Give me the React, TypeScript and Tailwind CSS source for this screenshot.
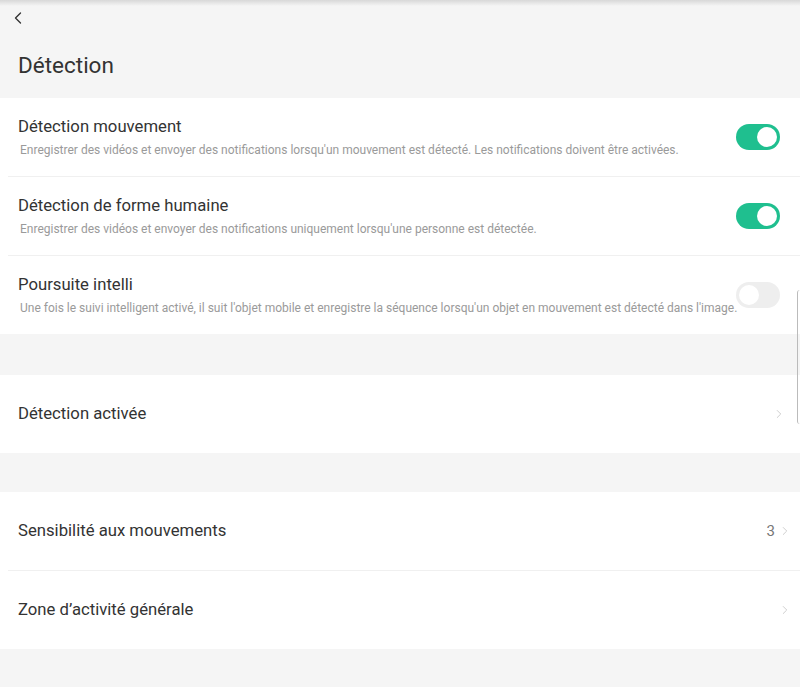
import { ChevronLeft, ChevronRight } from "lucide-react";

const toggles = [
  {
    title: "Détection mouvement",
    desc: "Enregistrer des vidéos et envoyer des notifications lorsqu'un mouvement est détecté. Les notifications doivent être activées.",
    on: true,
  },
  {
    title: "Détection de forme humaine",
    desc: "Enregistrer des vidéos et envoyer des notifications uniquement lorsqu'une personne est détectée.",
    on: true,
  },
  {
    title: "Poursuite intelli",
    desc: "Une fois le suivi intelligent activé, il suit l'objet mobile et enregistre la séquence lorsqu'un objet en mouvement est détecté dans l'image.",
    on: false,
  },
];

function Toggle({ on }: { on: boolean }) {
  return (
    <div
      className={`w-[44px] h-[26px] rounded-full p-[3px] flex shrink-0 ${
        on ? "bg-[#1fbf8f] justify-end" : "bg-[#eeeeee] justify-start"
      }`}
    >
      <div className="w-[20px] h-[20px] rounded-full bg-white" />
    </div>
  );
}

export default function App() {
  return (
    <div className="relative min-h-[687px] bg-[#f5f5f5] overflow-hidden" style={{ fontFamily: "Roboto, 'Noto Sans', sans-serif" }}>
      <div className="absolute top-0 left-0 right-0 h-[6px] bg-gradient-to-b from-[#d8d8d8] to-transparent" />
      <div className="h-[98px] flex flex-col px-[8px]">
        <div className="pt-[8px] h-[50px]">
          <ChevronLeft size={20} strokeWidth={1.6} className="text-[#333]" />
        </div>
        <h1 className="pl-[10px] text-[22.5px] leading-[30px] text-[#333]">Détection</h1>
      </div>

      <div className="bg-white">
        {toggles.map((t, i) => (
          <div key={t.title} className={`${i < toggles.length - 1 ? "border-b border-[#f0f0f0]" : ""} ml-[8px]`}>
            <div className="h-[78px] flex items-center pr-[20px]">
              <div className="flex-1 min-w-0 pl-[10px]">
                <div className="text-[16.7px] leading-[20px] text-[#333]">{t.title}</div>
                <div className="mt-[5px] ml-[2px] leading-[16px] text-[#9a9a9a] text-[12px] whitespace-nowrap">
                  {t.desc}
                </div>
              </div>
              <Toggle on={t.on} />
            </div>
          </div>
        ))}
      </div>

      <div className="h-[41px]" />
      <div className="bg-white">
        <div className="h-[78px] flex items-center pl-[18px] pr-[14px]">
          <span className="flex-1 text-[16.7px] text-[#333]">Détection activée</span>
          <ChevronRight size={14} strokeWidth={1.5} className="text-[#c8c8c8]" />
        </div>
      </div>

      <div className="h-[39px]" />
      <div className="bg-white">
        <div className="ml-[8px] border-b border-[#f0f0f0]">
          <div className="h-[78px] flex items-center pl-[10px] pr-[8px]">
            <span className="flex-1 text-[16.7px] text-[#333]">Sensibilité aux mouvements</span>
            <span className="text-[15px] text-[#777] mr-[3px]">3</span>
            <ChevronRight size={14} strokeWidth={1.5} className="text-[#c8c8c8]" />
          </div>
        </div>
        <div className="h-[78px] flex items-center pl-[18px] pr-[8px]">
          <span className="flex-1 text-[16.7px] text-[#333]">Zone d’activité générale</span>
          <ChevronRight size={14} strokeWidth={1.5} className="text-[#c8c8c8]" />
        </div>
      </div>

      <div className="absolute right-0 top-[290px] w-[3px] h-[134px] border-l border-[#bbb] rounded-l-sm" />
    </div>
  );
}
